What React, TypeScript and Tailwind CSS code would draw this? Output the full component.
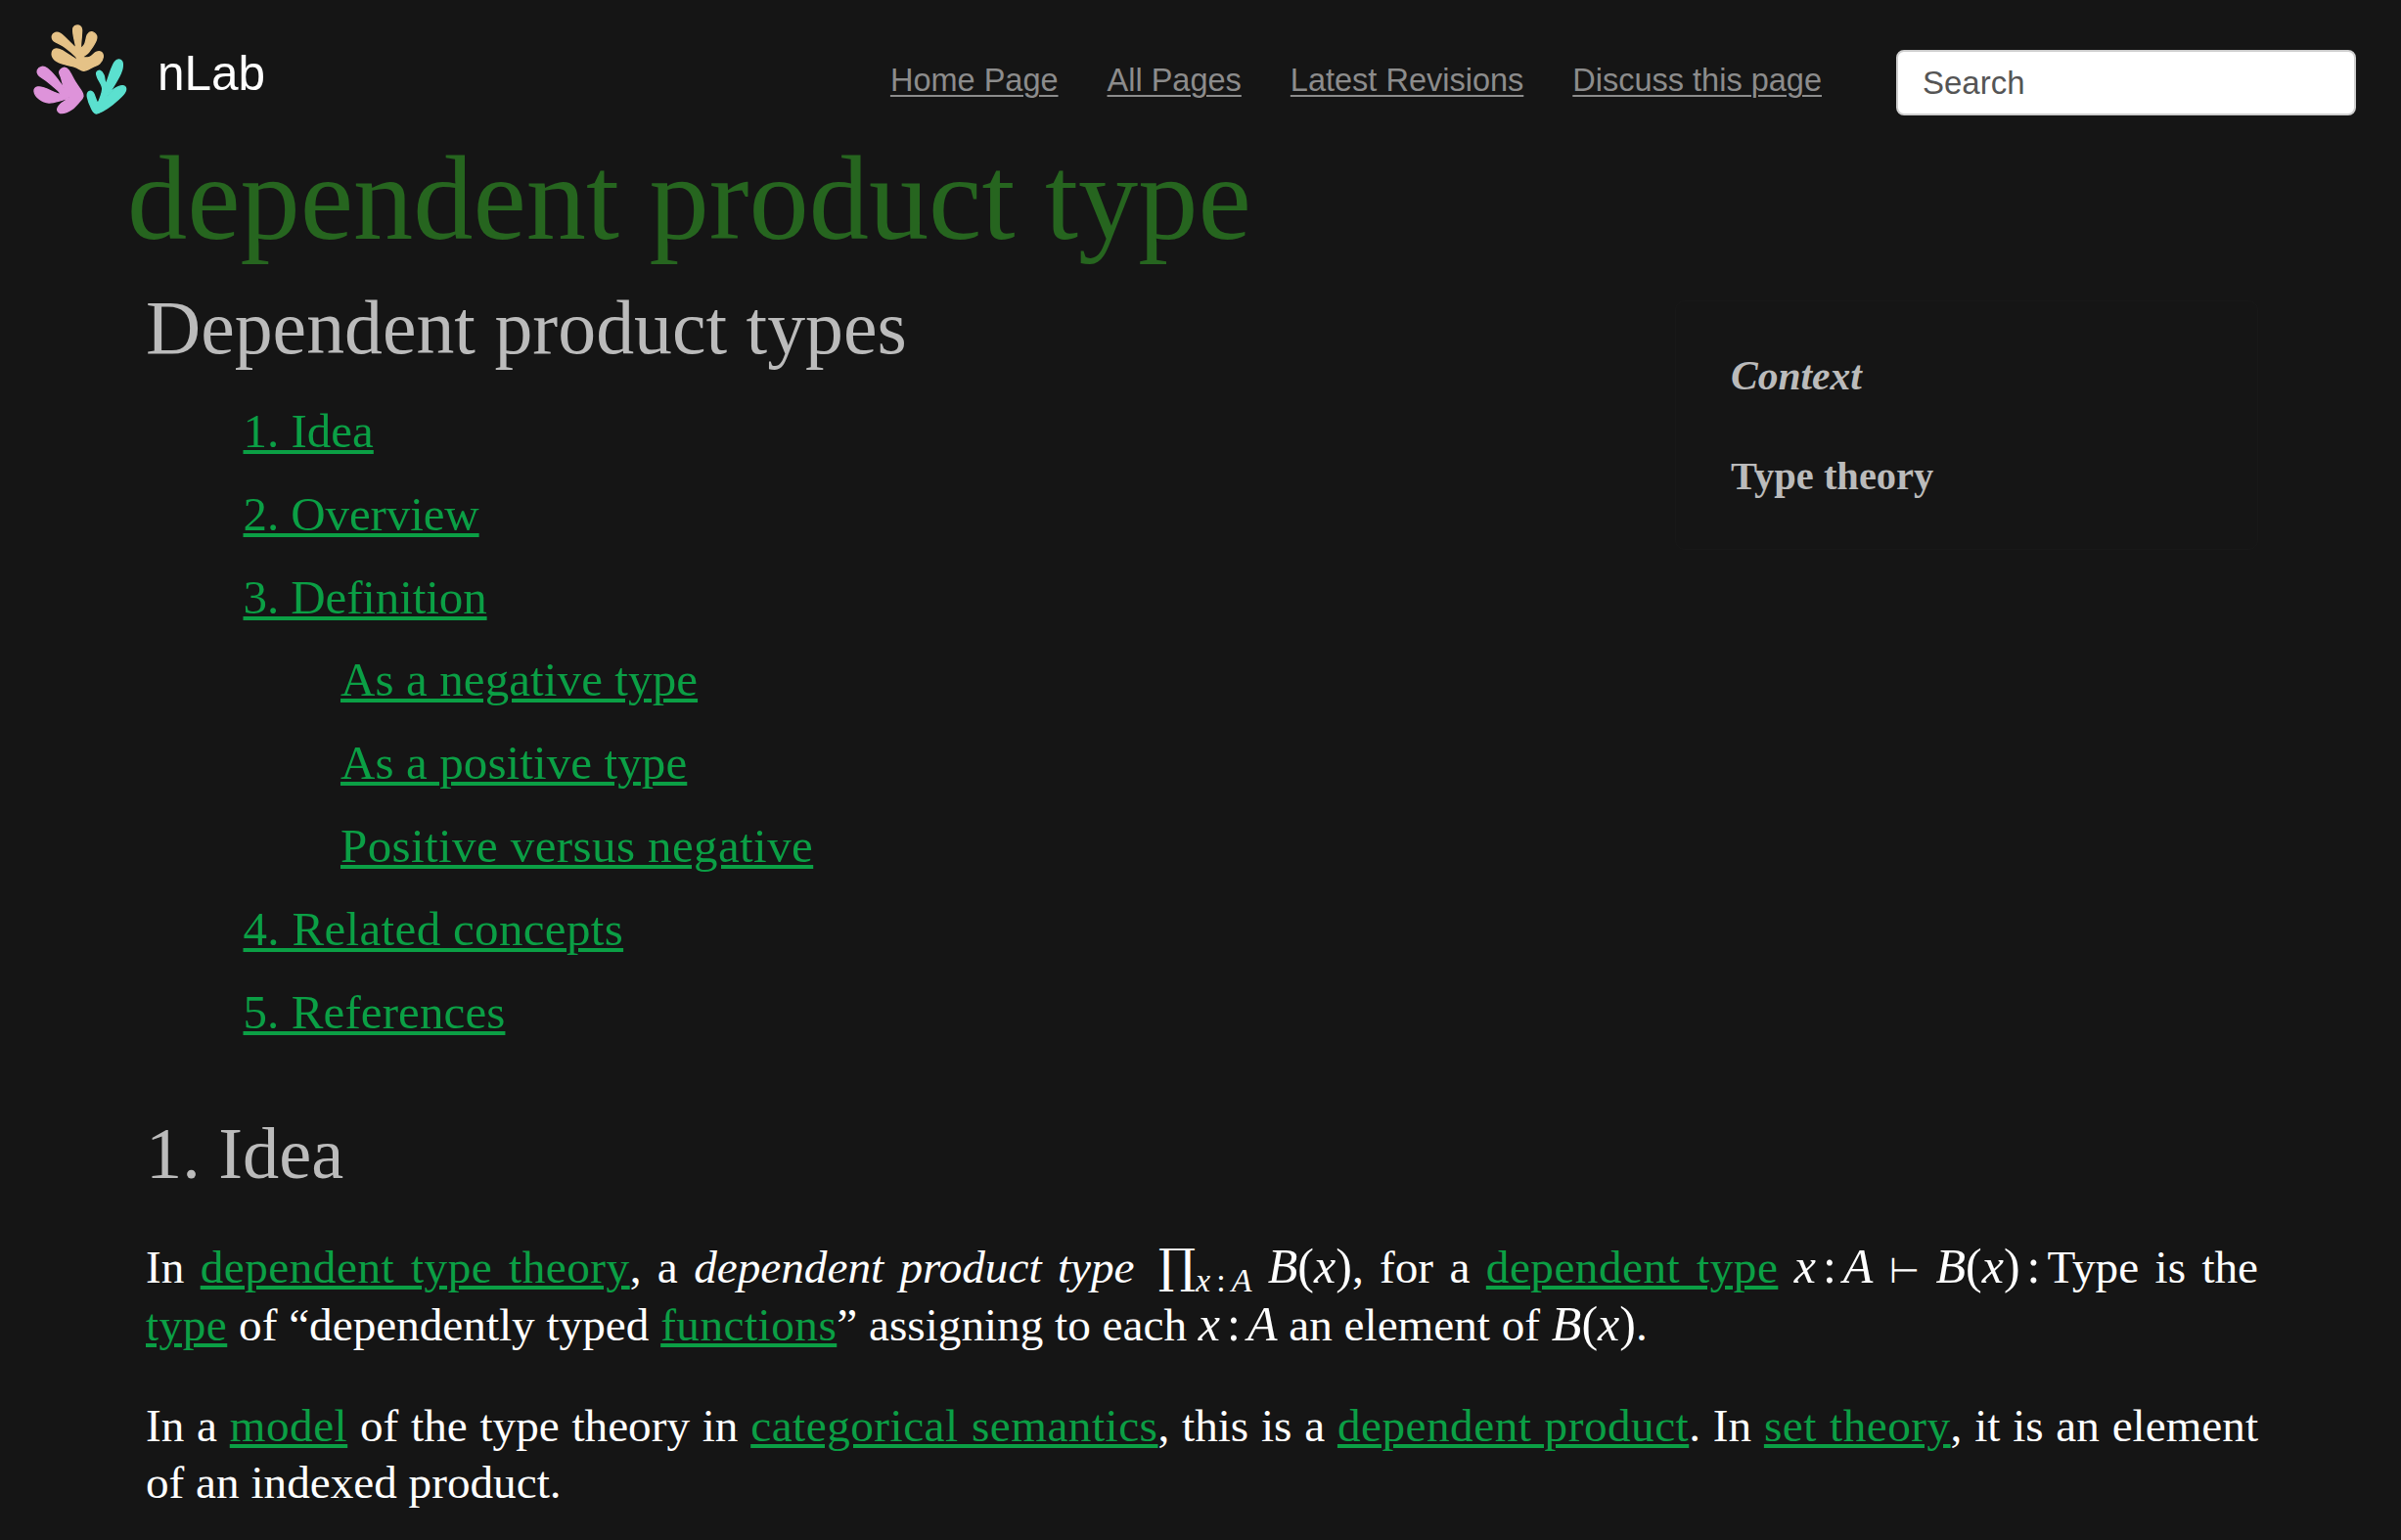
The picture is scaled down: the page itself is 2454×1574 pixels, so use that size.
import React from "react";

function smooth(pts: number[][]): string {
  const n = pts.length;
  let d = `M${pts[0][0]} ${pts[0][1]}`;
  for (let i = 0; i < n; i++) {
    const p0 = pts[(i - 1 + n) % n];
    const p1 = pts[i];
    const p2 = pts[(i + 1) % n];
    const p3 = pts[(i + 2) % n];
    const c1x = p1[0] + (p2[0] - p0[0]) / 6;
    const c1y = p1[1] + (p2[1] - p0[1]) / 6;
    const c2x = p2[0] - (p3[0] - p1[0]) / 6;
    const c2y = p2[1] - (p3[1] - p1[1]) / 6;
    d += `C${c1x} ${c1y} ${c2x} ${c2y} ${p2[0]} ${p2[1]}`;
  }
  return d + "Z";
}

const tan = [[197,172],[170,160],[130,150],[105,135],[100,115],[112,105],[130,110],[170,135],[172,128],[140,100],[105,80],[100,65],[110,55],[125,58],[150,80],[170,100],[172,95],[165,60],[165,40],[178,33],[190,42],[190,65],[188,100],[200,90],[208,62],[222,53],[236,65],[232,85],[212,115],[195,130],[215,130],[235,115],[250,115],[256,130],[245,150],[225,160]];
const pink = [[195,250],[185,265],[160,290],[130,302],[116,292],[125,275],[152,255],[130,262],[90,270],[60,258],[45,235],[55,222],[75,225],[120,243],[122,237],[85,205],[58,185],[55,170],[68,160],[85,165],[110,190],[132,220],[135,222],[128,195],[122,175],[135,163],[150,170],[170,205],[190,235]];
const teal = [[235,303],[222,290],[208,252],[213,236],[226,240],[238,268],[246,258],[254,225],[240,195],[236,178],[247,172],[258,185],[265,210],[280,170],[292,145],[305,138],[316,150],[310,180],[285,225],[268,250],[290,228],[315,218],[326,227],[318,245],[285,275],[255,295]];

function Logo() {
  return (
    <svg viewBox="0 0 360 345" className="w-[120px] h-[115px] shrink-0">
      <path d={smooth(tan)} fill="#e5c287" stroke="#e5c287" strokeWidth="4" strokeLinejoin="round" />
      <path d={smooth(pink)} fill="#de93da" stroke="#de93da" strokeWidth="4" strokeLinejoin="round" />
      <path d={smooth(teal)} fill="#5be0cf" stroke="#5be0cf" strokeWidth="4" strokeLinejoin="round" />
    </svg>
  );
}

function L({ children, className = "" }: { children: React.ReactNode; className?: string }) {
  return (
    <a href="#" className={`text-[#0b9f45] underline decoration-[4px] underline-offset-[3px] ${className}`}>
      {children}
    </a>
  );
}

function P({ children }: { children: React.ReactNode }) {
  return <L className="tracking-[0.5px]">{children}</L>;
}

function NavLink({ children }: { children: React.ReactNode }) {
  return (
    <a href="#" className="text-[#8c8c8c] underline decoration-[2px] underline-offset-[4px]">
      {children}
    </a>
  );
}

function Colon() {
  return <span className="not-italic mx-[7px]">:</span>;
}

function BofX() {
  return (
    <>
      <i>B</i>
      <span className="not-italic">(</span>
      <i>x</i>
      <span className="not-italic">)</span>
    </>
  );
}

function M({ children }: { children: React.ReactNode }) {
  return <span className="text-[50px] leading-none whitespace-nowrap">{children}</span>;
}

const toc: [string, string][] = [
  ["1. Idea", "pl-[99.5px]"],
  ["2. Overview", "pl-[99.5px] tracking-[-0.1px]"],
  ["3. Definition", "pl-[99.5px] tracking-[-0.1px]"],
  ["As a negative type", "pl-[199px] tracking-[0.1px]"],
  ["As a positive type", "pl-[199px] tracking-[0.1px]"],
  ["Positive versus negative", "pl-[199px] tracking-[0.4px]"],
  ["4. Related concepts", "pl-[99.5px] tracking-[0.33px]"],
  ["5. References", "pl-[99.5px] tracking-[0.1px]"],
];

export default function App() {
  return (
    <div className="w-[2454px] h-[1574px] overflow-hidden bg-[#151515] font-['Liberation_Serif',serif] text-white">
      <header className="flex items-start h-[142px] pl-[20px] pr-[46px] pt-[15px] font-['Liberation_Sans',sans-serif]">
        <Logo />
        <div className="ml-[21px] mt-[27px] text-[49.5px] leading-[66px] text-white">nLab</div>
        <nav className="ml-auto mt-[40px] flex gap-[50px] text-[32.5px] leading-[54px]">
          <NavLink>Home Page</NavLink>
          <NavLink>All Pages</NavLink>
          <NavLink>Latest Revisions</NavLink>
          <NavLink>Discuss this page</NavLink>
        </nav>
        <input
          placeholder="Search"
          className="ml-[76px] mt-[36px] w-[470px] h-[67px] rounded-[8px] bg-white border-2 border-[#cfcfcf] pl-[25px] text-[33px] text-[#555] placeholder:text-[#555] outline-none"
        />
      </header>
      <h1 className="pl-[130px] text-[122.4px] leading-[122px] text-[#26651f]">dependent product type</h1>
      <main className="pl-[149px] w-[2308px] pt-[33px]">
        <aside className="float-right mt-[10px] w-[596px] h-[255px] rounded-[10px] border border-[#181818] pl-[56px] pt-[46px] text-[#bbbbbb] font-bold text-[40.5px]">
          <div className="italic leading-[60px] text-[41.5px]">Context</div>
          <div className="mt-[43px] leading-[60px]">Type theory</div>
        </aside>
        <h2 className="text-[77.8px] leading-[76px] text-[#bbbbbb]">Dependent product types</h2>
        <ul className="mt-[26px] text-[49px] leading-[84.8px]">
          {toc.map(([t, cls]) => (
            <li key={t} className={cls}>
              <L>{t}</L>
            </li>
          ))}
        </ul>
        <h2 className="mt-[66px] text-[74.3px] leading-[72px] text-[#bbbbbb]">1. Idea</h2>
        <p className="mt-[51px] text-[47.2px] leading-[58.6px] text-justify">
          In <P>dependent type theory</P>, a <em>dependent product type</em>{" "}
          <span className="whitespace-nowrap leading-none">
            <span className="font-['DejaVu_Serif',serif] text-[48px] leading-none ml-[8px]">∏</span>
            <span className="text-[34px] leading-none relative top-[9px]">
              <i>x</i>
              <span className="mx-[6px]">:</span>
              <i>A</i>
            </span>
          </span>{" "}
          <M>
            <BofX />
          </M>
          , for a <P>dependent type</P>{" "}
          <M>
            <i>x</i>
            <Colon />
            <i>A</i>
          </M>{" "}
          <span className="font-['DejaVu_Sans',sans-serif] text-[36px] leading-none">⊢</span>{" "}
          <M>
            <BofX />
            <Colon />
          </M>
          Type is the <P>type</P> of “dependently typed <P>functions</P>” assigning to each{" "}
          <M>
            <i>x</i>
            <Colon />
            <i>A</i>
          </M>{" "}
          an element of{" "}
          <M>
            <BofX />
          </M>
          .
        </p>
        <p className="mt-[44px] text-[47.2px] leading-[58.6px] text-justify">
          In a <P>model</P> of the type theory in <P>categorical semantics</P>, this is a <P>dependent product</P>. In{" "}
          <P>set theory</P>, it is an element of an indexed product.
        </p>
      </main>
    </div>
  );
}
